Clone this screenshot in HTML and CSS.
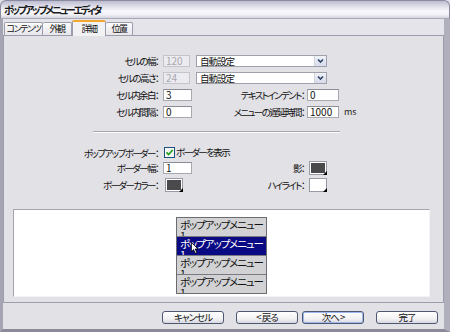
FILE: index.html
```html
<!DOCTYPE html>
<html lang="ja">
<head>
<meta charset="utf-8">
<title>ポップアップメニューエディタ</title>
<link rel="stylesheet" href="styles.css">
</head>
<body>
<div class="window">
  <div class="titlebar"><span class="title">ポップアップメニューエディタ</span></div>
  <div class="frame">
    <div class="tabs">
      <div class="tab t1">コンテンツ</div>
      <div class="tab t2">外観</div>
      <div class="tab t3 active">詳細</div>
      <div class="tab t4">位置</div>
    </div>
    <div class="panel">
      <div class="grid upper">
        <span class="lbl c1">セルの幅：</span>
        <div class="field disabled w27 c2">120</div>
        <div class="select"><span class="sel-text">自動設定</span><span class="arrow"><svg width="11" height="10" viewBox="0 0 11 10"><path d="M3 3.5 L5.5 6 L8 3.5" fill="none" stroke="#34456a" stroke-width="1.7"/></svg></span></div>

        <span class="lbl c1">セルの高さ：</span>
        <div class="field disabled w27 c2">24</div>
        <div class="select"><span class="sel-text">自動設定</span><span class="arrow"><svg width="11" height="10" viewBox="0 0 11 10"><path d="M3 3.5 L5.5 6 L8 3.5" fill="none" stroke="#34456a" stroke-width="1.7"/></svg></span></div>

        <span class="lbl c1">セル内余白：</span>
        <div class="field w29 c2">3</div>
        <span class="lbl c3">テキストインデント：</span>
        <div class="field w32 c4">0</div>

        <span class="lbl c1">セル内間隔：</span>
        <div class="field w29 c2">0</div>
        <span class="lbl c3">メニューの遅延時間：</span>
        <div class="field w32 c4">1000</div>
        <span class="unit c5">ms</span>
      </div>

      <div class="sep"></div>

      <div class="grid lower">
        <span class="lbl c1">ポップアップボーダー：</span>
        <div class="check"><svg width="11" height="11" viewBox="0 0 11 11"><rect x="0.5" y="0.5" width="10" height="10" fill="#f6f6f2" stroke="#1c5180"/><path d="M2.5 5.3 L4.6 7.5 L8.6 3" fill="none" stroke="#21a121" stroke-width="1.8"/></svg><span>ボーダーを表示</span></div>

        <span class="lbl c1">ボーダー幅：</span>
        <div class="field w29 c2">1</div>
        <span class="lbl c3">影：</span>
        <div class="swatch dark c4"></div>

        <span class="lbl c1">ボーダーカラー：</span>
        <div class="swatch dark left c2"></div>
        <span class="lbl c3">ハイライト：</span>
        <div class="swatch light c4"></div>
      </div>

      <div class="preview">
        <div class="menu">
          <div class="item">ポップアップメニュー<br>1</div>
          <div class="item hover">ポップアップメニュー<br>1</div>
          <div class="item">ポップアップメニュー<br>1</div>
          <div class="item">ポップアップメニュー<br>1</div>
          <svg class="cursor" width="8" height="13" viewBox="0 0 10 16"><path d="M0.5 0.5 L0.5 12 L3.2 9.4 L5.2 14 L7.2 13.1 L5.2 8.6 L8.8 8.6 Z" fill="#fff" stroke="#000" stroke-width="1"/></svg>
        </div>
      </div>
    </div>
    <div class="buttons">
      <div class="btn">キャンセル</div>
      <div class="btn back">&lt; 戻る</div>
      <div class="btn focus">次へ &gt;</div>
      <div class="btn finish">完了</div>
    </div>
  </div>
</div>
</body>
</html>
```

FILE: styles.css
```css
* { box-sizing: border-box; margin: 0; padding: 0; }
html, body { width: 450px; height: 332px; overflow: hidden; }
body {
  background: #8c8c9c;
  font-family: "Noto Sans CJK JP", "Noto Sans", sans-serif;
  font-size: 9.5px;
  letter-spacing: -1.6px;
  font-feature-settings: "palt";
  color: #111;
}
.window {
  width: 450px;
  height: 332px;
  display: flex;
  flex-direction: column;
  background: #e2e1e6;
}
.titlebar {
  height: 19px;
  flex: none;
  border-radius: 6px 6px 0 0;
  border: 1px solid #8a8aa0;
  border-bottom-color: #a8a8b8;
  background: linear-gradient(#bcbcd0 0%, #e2e2ec 35%, #f8f8fc 60%, #f0f0f6 80%, #d4d4e0 100%);
  display: flex;
  align-items: center;
  padding-left: 3px;
}
.title { font-weight: bold; font-size: 10px; letter-spacing: -2.2px; color: #1a1a1a; line-height: 12px; }
.frame {
  flex: 1;
  display: flex;
  flex-direction: column;
  border-left: 3px solid #a4a4b2;
  border-right: 6px solid #b0b0bc;
  border-bottom: 3px solid #8a8a98;
  background: #e2e1e6;
}
.tabs {
  height: 16px;
  flex: none;
  display: flex;
  align-items: flex-end;
  padding-left: 1px;
  background: #e4e4ea;
}
.tab {
  height: 13px;
  border: 1px solid #9c9cac;
  border-bottom: none;
  border-radius: 2px 2px 0 0;
  background: linear-gradient(#fcfcfe, #e6e6ec);
  display: flex;
  align-items: center;
  justify-content: center;
  line-height: 12px;
  white-space: nowrap;
  font-size: 9px;
  letter-spacing: -1.4px;
}
.t1 { width: 39px; }
.t2 { width: 29px; border-left: none; }
.t3 { width: 34px; }
.t4 { width: 27px; border-left: none; }
.tab.active {
  height: 16px;
  margin-bottom: -1px;
  position: relative;
  border-top: 2px solid #f0a830;
  background: #f2f2f5;
}
.panel {
  height: 268px;
  flex: none;
  border: 1px solid #9c9cac;
  background: #e2e1e6;
  display: flex;
  flex-direction: column;
}
.grid {
  display: grid;
  grid-template-columns: 157px 33px 113px 34px 1fr;
  align-items: center;
}
.c1 { grid-column: 1; }
.c2 { grid-column: 2; }
.c3 { grid-column: 3; }
.c4 { grid-column: 4; }
.c5 { grid-column: 5; }
.upper {
  margin-top: 19px;
  grid-template-rows: repeat(4, 12px);
  row-gap: 5px;
}
.lower {
  margin-top: 14px;
  grid-template-rows: 11px 13px 15px;
  row-gap: 3px;
}
.lbl {
  text-align: right;
  padding-right: 3px;
  white-space: nowrap;
  line-height: 12px;
}
.field {
  height: 12px;
  margin-left: 2px;
  border: 1px solid #a8a8b0;
  border-top-color: #8c8c98;
  background: #fff;
  line-height: 10px;
  padding-left: 2px;
  font-size: 10px;
  letter-spacing: 0;
  color: #111;
  white-space: nowrap;
  overflow: hidden;
}
.field.disabled { background: #ecebef; color: #a8a8b0; border-color: #c4c4cc; }
.w27 { width: 27px; }
.w29 { width: 29px; }
.w32 { width: 32px; margin-left: 0; }
.unit { margin-left: 3px; line-height: 12px; color: #222; letter-spacing: 0; font-size: 9px; }
.select {
  grid-column: 3 / 5;
  margin-left: 2px;
  width: 131px;
  height: 12px;
  border: 1px solid #a0a0ac;
  background: #fff;
  display: flex;
  align-items: center;
  justify-content: space-between;
}
.sel-text { padding-left: 3px; line-height: 10px; letter-spacing: -1px; }
.arrow {
  width: 12px;
  height: 10px;
  display: flex;
  align-items: center;
  justify-content: center;
  background: linear-gradient(#f0f2f8, #d6dcea);
  border-left: 1px solid #d0d4e0;
}
.sep {
  margin: 13px 0 0 89px;
  width: 247px;
  height: 2px;
  border-top: 1px solid #a6a6b0;
  border-bottom: 1px solid #fbfbfd;
}
.check {
  grid-column: 2 / 6;
  margin-left: 3px;
  display: flex;
  align-items: center;
  gap: 1px;
  white-space: nowrap;
  line-height: 11px;
}
.swatch {
  width: 18px;
  height: 14px;
  margin-left: 2px;
  border: 1px solid #9a9aa6;
  background: #fff;
  padding: 1px;
  position: relative;
}
.swatch.left { margin-left: 4px; }
.swatch::before {
  content: "";
  display: block;
  width: 100%;
  height: 100%;
}
.swatch.dark::before { background: #4a4a4c; }
.swatch.light::before { background: #fff; }
.swatch::after {
  content: "";
  position: absolute;
  right: -1px;
  bottom: -1px;
  width: 0;
  height: 0;
  border-left: 4px solid transparent;
  border-bottom: 4px solid #000;
}
.preview {
  margin: 17px 0 0 9px;
  width: 417px;
  height: 88px;
  background: #fff;
  border: 1px solid #a4a4ae;
  border-right-color: #f4f4f6;
  border-bottom-color: #f4f4f6;
  display: flex;
  justify-content: center;
  padding-top: 7px;
}
.menu {
  width: 91px;
  height: 77px;
  border: 1px solid #6c6c70;
  position: relative;
  align-self: flex-start;
}
.item {
  height: 18px;
  background: #d2d2d4;
  font-size: 10.5px;
  letter-spacing: -1.1px;
  line-height: 11px;
  padding: 1px 0 0 3px;
  overflow: hidden;
  white-space: nowrap;
  color: #111;
}
.item + .item { height: 19px; border-top: 1px solid #7a7a80; }
.item.hover { background: #0a0a84; color: #fff; }
.cursor { position: absolute; left: 14px; top: 24px; }
.buttons {
  flex: 1;
  display: flex;
  justify-content: flex-end;
  align-items: flex-start;
  padding: 8px 6px 0 0;
}
.btn {
  width: 62px;
  height: 13px;
  border: 1px solid #4e5870;
  border-radius: 3px;
  background: linear-gradient(#ffffff, #f2f2f4 60%, #d8d8e2);
  text-align: center;
  line-height: 11px;
  font-size: 9.5px;
  letter-spacing: -1px;
  white-space: nowrap;
}
.back { margin-left: 12px; }
.focus { margin-left: 4px; box-shadow: inset 0 0 0 1px #9cb8ec; }
.finish { margin-left: 12px; }
```
